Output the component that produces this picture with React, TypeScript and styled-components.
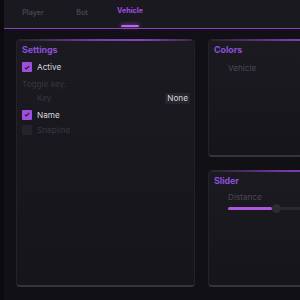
import React from "react";
import styled, { createGlobalStyle } from "styled-components";

const Global = createGlobalStyle`
  html, body { margin: 0; padding: 0; background: #111015; }
  body { width: 300px; height: 300px; overflow: hidden; font-family: Inter, "Noto Sans", sans-serif; }
  * { box-sizing: border-box; }
`;

const Root = styled.div`
  display: flex;
  width: 300px;
  height: 300px;
  overflow: hidden;
`;

const Strip = styled.div`
  width: 4px;
  flex: none;
  background: #0b0a0e;
`;

const Main = styled.div`
  flex: 1;
  display: flex;
  flex-direction: column;
  min-width: 0;
`;

const Header = styled.div`
  height: 29px;
  flex: none;
  background: #1a1920;
  border-bottom: 1px solid #8a3fc0;
  display: flex;
  align-items: stretch;
  padding-left: 4px;
`;

const Tab = styled.div<{ $active?: boolean; $w: number }>`
  position: relative;
  width: ${(p) => p.$w}px;
  display: flex;
  justify-content: center;
  align-items: flex-start;
  padding-top: ${(p) => (p.$active ? 6 : 8)}px;
  font-size: 7.2px;
  font-weight: ${(p) => (p.$active ? 700 : 600)};
  color: ${(p) => (p.$active ? "#a04ee0" : "#47454e")};
  ${(p) =>
    p.$active &&
    `&::after {
      content: "";
      position: absolute;
      bottom: 1px;
      left: 50%;
      width: 18px;
      margin-left: -9px;
      height: 2px;
      border-radius: 1px;
      background: #b865e8;
      box-shadow: 0 0 4px #a04ee0;
    }`}
`;

const Content = styled.div`
  flex: 1;
  display: flex;
  gap: 13px;
  padding: 10px 0 0 12px;
  background: #111015;
  min-height: 0;
`;

const Column = styled.div`
  display: flex;
  flex-direction: column;
  gap: 13px;
  flex: none;
`;

const Panel = styled.div<{ $h: number }>`
  position: relative;
  width: 179px;
  height: ${(p) => p.$h}px;
  background: linear-gradient(180deg, #1b1a21 0%, #16151b 100%);
  border-radius: 4px;
  border-left: 1px solid #232228;
  border-right: 1px solid #232228;
  border-bottom: 2px solid #35343c;
  padding: 4px 4px 0 5px;
  &::before {
    content: "";
    position: absolute;
    top: 0;
    left: 2px;
    right: 2px;
    height: 2px;
    border-radius: 2px;
    background: linear-gradient(90deg, #2a2232 0%, #7a3aa8 45%, #8a40c0 70%, #3a2a48 100%);
  }
`;

const Title = styled.div`
  font-size: 8.8px;
  font-weight: 700;
  color: #8f4fdb;
  height: 14px;
  line-height: 14px;
  margin-bottom: 2px;
`;

const Row = styled.div<{ $indent?: number; $h: number }>`
  display: flex;
  align-items: center;
  height: ${(p) => p.$h}px;
  padding-left: ${(p) => p.$indent ?? 0}px;
  gap: 5px;
`;

const Check = styled.div<{ $on?: boolean }>`
  width: 10px;
  height: 10px;
  flex: none;
  border-radius: 1px;
  background: ${(p) => (p.$on ? "#a04ee0" : "#24232a")};
  display: flex;
  align-items: center;
  justify-content: center;
`;

const Label = styled.span<{ $dim?: boolean; $faint?: boolean }>`
  font-size: 8.2px;
  color: ${(p) => (p.$faint ? "#38363e" : p.$dim ? "#4a4851" : "#d8d6de")};
`;

const Spacer = styled.div`
  flex: 1;
`;

const Badge = styled.span`
  font-size: 8.2px;
  color: #d8d6de;
  background: #26252c;
  padding: 1px 2px;
  line-height: 9px;
`;

const Track = styled.div`
  position: relative;
  height: 3px;
  background: #2a2930;
  margin-left: 14px;
  margin-top: 3px;
  border-radius: 2px;
`;

const Fill = styled.div`
  height: 3px;
  background: #b057e0;
  border-radius: 2px;
`;

const Thumb = styled.div`
  position: absolute;
  top: -3px;
  width: 9px;
  height: 9px;
  margin-left: -4px;
  border-radius: 50%;
  background: #2c2b32;
`;

const Tick = () => (
  <svg width="6" height="5" viewBox="0 0 6 5">
    <path d="M0.8 2.6 L2.3 4 L5.2 1" stroke="#2a1a34" strokeWidth="1.1" fill="none" />
  </svg>
);

export default function App() {
  return (
    <Root>
      <Global />
      <Strip />
      <Main>
        <Header>
          <Tab $w={50}>Player</Tab>
          <Tab $w={48}>Bot</Tab>
          <Tab $w={48} $active>
            Vehicle
          </Tab>
        </Header>
        <Content>
          <Column>
            <Panel $h={248}>
              <Title>Settings</Title>
              <Row $h={16}>
                <Check $on>
                  <Tick />
                </Check>
                <Label>Active</Label>
              </Row>
              <Row $h={18}>
                <Label $faint>Toggle key:</Label>
              </Row>
              <Row $indent={15} $h={10}>
                <Label $faint>Key</Label>
                <Spacer />
                <Badge>None</Badge>
              </Row>
              <Row $h={23}>
                <Check $on>
                  <Tick />
                </Check>
                <Label>Name</Label>
              </Row>
              <Row $h={8}>
                <Check />
                <Label $faint>Snapline</Label>
              </Row>
            </Panel>
          </Column>
          <Column>
            <Panel $h={118}>
              <Title>Colors</Title>
              <Row $indent={14} $h={17}>
                <Label $dim>Vehicle</Label>
              </Row>
            </Panel>
            <Panel $h={117}>
              <Title>Slider</Title>
              <Row $indent={14} $h={14}>
                <Label $dim>Distance</Label>
              </Row>
              <Track>
                <Fill style={{ width: "44px" }} />
                <Thumb style={{ left: "48px" }} />
              </Track>
            </Panel>
          </Column>
        </Content>
      </Main>
    </Root>
  );
}
